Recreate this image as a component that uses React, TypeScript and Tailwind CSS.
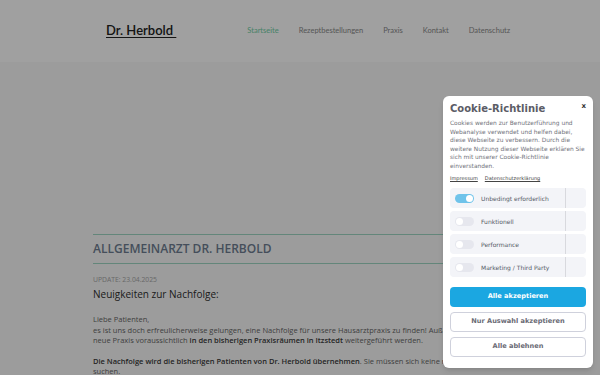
import React from "react";

const Toggle = ({ on }: { on?: boolean }) => (
  <div
    className={
      "w-[19px] h-[9px] rounded-full flex items-center px-[1px] " +
      (on ? "bg-[#6fc3ea] justify-end" : "bg-[#e6e7ee] justify-start")
    }
  >
    <div className="w-[7px] h-[7px] rounded-full bg-white" />
  </div>
);

const Row = ({ label, on }: { label: string; on?: boolean }) => (
  <div className="flex items-stretch h-[20px] rounded-[4px] bg-[#f3f4f8]">
    <div className="flex-1 flex items-center pl-[5px] gap-[7px]">
      <Toggle on={on} />
      <span className="text-[6px] text-[#555a66]">{label}</span>
    </div>
    <div className="w-[21px] border-l border-[#d8d9de]" />
  </div>
);

export default function App() {
  return (
    <div className="relative w-[600px] h-[375px] overflow-hidden bg-[#f9f9f9] font-['Open_Sans',sans-serif]">
      <header className="h-[62px] bg-white flex items-center pl-[106px]">
        <a className="text-[13px] font-semibold text-[#222] underline underline-offset-[2px] font-['Lato','Open_Sans',sans-serif]">
          Dr. Herbold&nbsp;
        </a>
        <nav className="ml-[71px] flex gap-[20px] text-[7.5px] font-['Lato',sans-serif] text-[#8a8a8a]">
          <span className="text-[#72cfa6]">Startseite</span>
          <span>Rezeptbestellungen</span>
          <span>Praxis</span>
          <span>Kontakt</span>
          <span>Datenschutz</span>
        </nav>
      </header>

      <div className="h-[172px]" />

      <main className="ml-[93px] w-[414px]">
        <div className="border-t border-b border-[#9fd6c2] h-[30px] flex items-center">
          <h1 className="text-[12px] font-semibold text-[#6e7d91]">
            ALLGEMEINARZT DR. HERBOLD
          </h1>
        </div>
        <div className="mt-[12px] text-[6.8px] text-[#a6a6a6] leading-[8px]">UPDATE: 23.04.2025</div>
        <h2 className="mt-[3px] text-[10px] font-medium text-[#2e2e2e] leading-[14px]">
          Neuigkeiten zur Nachfolge:
        </h2>
        <div className="mt-[13px] text-[7.5px] leading-[10.5px] text-[#666] whitespace-nowrap">
          <div>Liebe Patienten,</div>
          <div>
            es ist uns doch erfreulicherweise gelungen, eine Nachfolge für unsere Hausarztpraxis zu finden! Außerdem wird die
          </div>
          <div>
            neue Praxis voraussichtlich <b className="font-semibold text-[#3a3a3a]">in den bisherigen Praxisräumen in Itzstedt</b> weitergeführt werden.
          </div>
          <div className="mt-[10px]">
            <b className="font-semibold text-[#3a3a3a]">Die Nachfolge wird die bisherigen Patienten von Dr. Herbold übernehmen</b>. Sie müssen sich keine neue Hausarztpraxis
          </div>
          <div>suchen.</div>
        </div>
      </main>

      <div className="absolute inset-0 bg-black/[0.373]" />

      <div className="absolute left-[443px] top-[96px] w-[150px] h-[272px] bg-white rounded-[6px] shadow-md px-[7px] pt-[4px] font-['DejaVu_Sans',sans-serif]">
        <div className="flex items-start justify-between">
          <div className="text-[10px] font-bold text-[#5b5c66] leading-[14px] mt-[2px]">Cookie-Richtlinie</div>
          <div className="text-[7px] font-bold text-[#333] leading-[10px] mt-[1px]">x</div>
        </div>
        <p className="mt-[3px] text-[5.9px] leading-[8.6px] text-[#70727a] whitespace-nowrap">
          Cookies werden zur Benutzerführung und
          <br />
          Webanalyse verwendet und helfen dabei,
          <br />
          diese Webseite zu verbessern. Durch die
          <br />
          weitere Nutzung dieser Webseite erklären Sie
          <br />
          sich mit unserer Cookie-Richtlinie
          <br />
          einverstanden.
        </p>
        <div className="mt-[4px] flex gap-[7px] text-[5px] text-[#444] underline">
          <span>Impressum</span>
          <span>Datenschutzerklärung</span>
        </div>
        <div className="mt-[6px] flex flex-col gap-[3px]">
          <Row label="Unbedingt erforderlich" on />
          <Row label="Funktionell" />
          <Row label="Performance" />
          <Row label="Marketing / Third Party" />
        </div>
        <div className="mt-[10px] flex flex-col gap-[5px]">
          <button className="h-[20px] rounded-[4px] bg-[#1ba7e1] text-white text-[6.6px] font-bold">
            Alle akzeptieren
          </button>
          <button className="h-[20px] rounded-[4px] bg-white border border-[#cfd1dc] text-[#6a6b75] text-[6.6px] font-bold">
            Nur Auswahl akzeptieren
          </button>
          <button className="h-[20px] rounded-[4px] bg-white border border-[#cfd1dc] text-[#6a6b75] text-[6.6px] font-bold">
            Alle ablehnen
          </button>
        </div>
      </div>
    </div>
  );
}
